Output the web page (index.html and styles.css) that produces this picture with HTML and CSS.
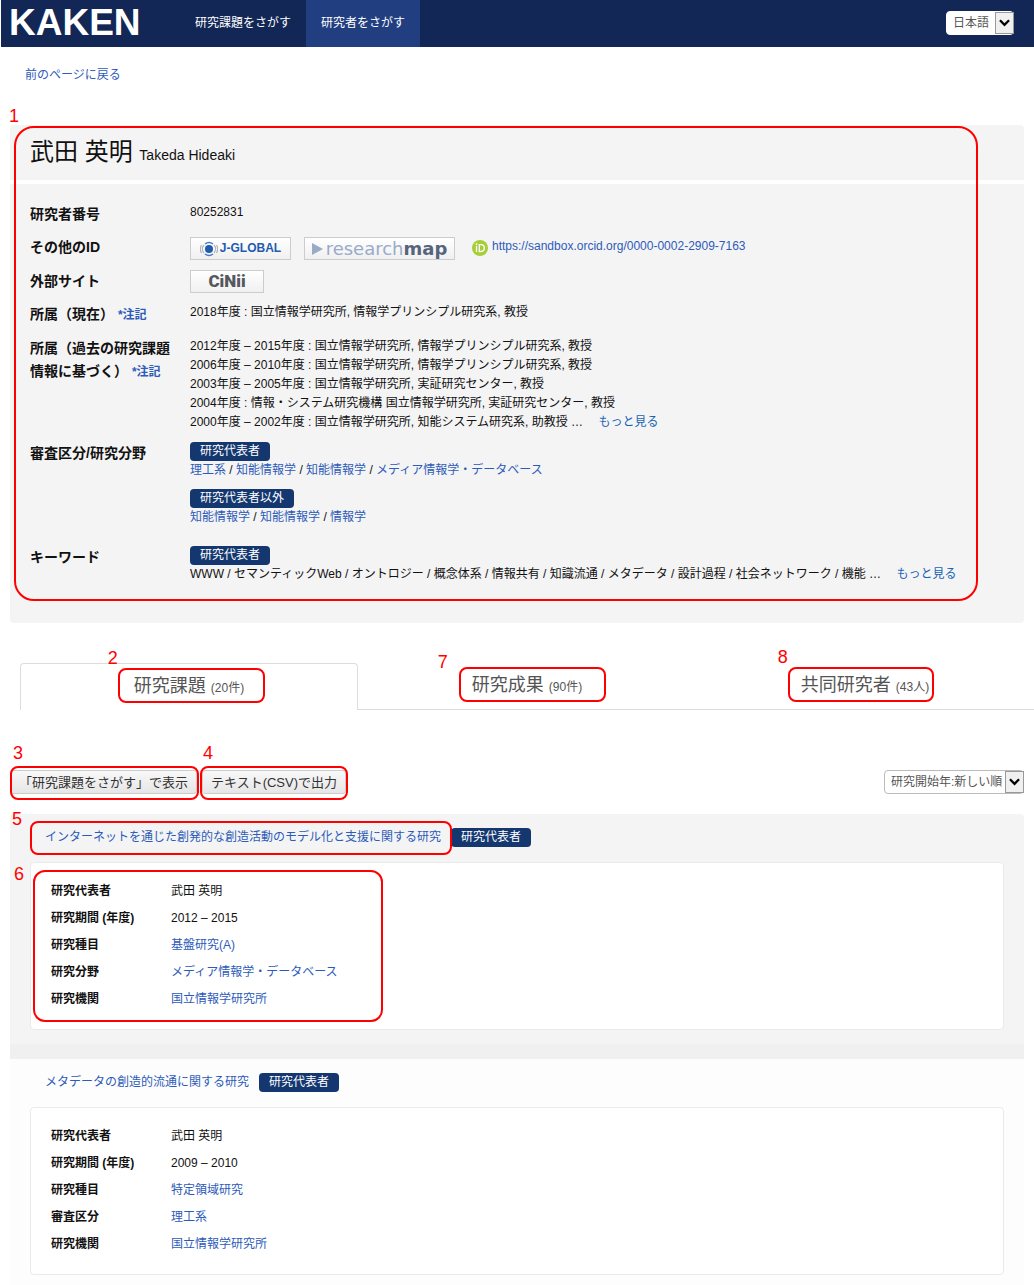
FILE: index.html
```html
<!DOCTYPE html>
<html lang="ja">
<head>
    <meta charset="UTF-8">
    <meta name="viewport" content="width=device-width, initial-scale=1.0">
    <title>KAKEN - 武田 英明</title>
    <link rel="stylesheet" href="styles.css">
</head>
<body>
    <header class="header">
        <a class="logo" href="#">KAKEN</a>
        <nav class="nav">
            <a href="#">研究課題をさがす</a>
            <a class="active" href="#">研究者をさがす</a>
        </nav>
        <div class="select-wrap lang">
            <select aria-label="言語">
                <option>日本語</option>
                <option>English</option>
            </select>
            <svg class="arrow" viewBox="0 0 18 22"><path d="M4 8l5 5 5-5" fill="none" stroke="#000" stroke-width="2.500"/></svg>
        </div>
    </header>

    <main class="main">
        <p class="back"><a href="#">前のページに戻る</a></p>

        <section class="profile">
            <div class="profile-head">
                <h1>武田 英明 <small>Takeda Hideaki</small></h1>
            </div>
            <dl class="profile-body">
                <dt>研究者番号</dt>
                <dd>80252831</dd>
                <dt>その他のID</dt>
                <dd class="ids">
                    <a class="site-btn jglobal" href="#">
                        <svg width="18" height="16" viewBox="0 0 18 16">
                            <circle cx="9" cy="8" r="4" fill="#1f5cb0"/>
                            <path d="M5 3a6.500 6.500 0 0 1 8 0M5 13a6.500 6.500 0 0 0 8 0" fill="none" stroke="#4a7cc0" stroke-width="1.500"/>
                            <path d="M4 4a6 6 0 0 0 0 8M1.500 4a8 8 0 0 0 0 8M14 4a6 6 0 0 1 0 8M16.500 4a8 8 0 0 1 0 8" fill="none" stroke="#b0b4ba" stroke-width="1.200"/>
                        </svg><span>J-GLOBAL</span>
                    </a>
                    <a class="site-btn rmap" href="#">
                        <svg width="11" height="12" viewBox="0 0 11 12"><path d="M0 0l11 6-11 6z" fill="#9aabc9"/></svg>
                        <span>research<b>map</b></span>
                    </a>
                    <a class="orcid" href="#">
                        <svg width="16" height="16" viewBox="0 0 16 16">
                            <circle cx="8" cy="8" r="8" fill="#a6ce39"/>
                            <path d="M4.500 6v6M7.300 4.700v6.800h1.600a3.400 3.400 0 0 0 0-6.800z" fill="none" stroke="#fff" stroke-width="1.300"/>
                            <circle cx="4.500" cy="4.200" r="0.900" fill="#fff"/>
                        </svg>
                        <span>https://sandbox.orcid.org/0000-0002-2909-7163</span>
                    </a>
                </dd>
                <dt>外部サイト</dt>
                <dd><a class="site-btn cinii" href="#">CiNii</a></dd>
                <dt>所属（現在） <a class="ref" href="#">*注記</a></dt>
                <dd>2018年度 : 国立情報学研究所, 情報学プリンシプル研究系, 教授</dd>
                <dt>所属（過去の研究課題<br>情報に基づく） <a class="ref" href="#">*注記</a></dt>
                <dd>
                    2012年度 – 2015年度 : 国立情報学研究所, 情報学プリンシプル研究系, 教授<br>
                    2006年度 – 2010年度 : 国立情報学研究所, 情報学プリンシプル研究系, 教授<br>
                    2003年度 – 2005年度 : 国立情報学研究所, 実証研究センター, 教授<br>
                    2004年度 : 情報・システム研究機構 国立情報学研究所, 実証研究センター, 教授<br>
                    2000年度 – 2002年度 : 国立情報学研究所, 知能システム研究系, 助教授 … <a class="more" href="#">もっと見る</a>
                </dd>
                <dt>審査区分/研究分野</dt>
                <dd class="fields">
                    <div>
                        <span class="badge">研究代表者</span>
                        <p><a href="#">理工系</a> / <a href="#">知能情報学</a> / <a href="#">知能情報学</a> / <a href="#">メディア情報学・データベース</a></p>
                    </div>
                    <div>
                        <span class="badge">研究代表者以外</span>
                        <p><a href="#">知能情報学</a> / <a href="#">知能情報学</a> / <a href="#">情報学</a></p>
                    </div>
                </dd>
                <dt>キーワード</dt>
                <dd>
                    <span class="badge">研究代表者</span>
                    <p>WWW / セマンティックWeb / オントロジー / 概念体系 / 情報共有 / 知識流通 / メタデータ / 設計過程 / 社会ネットワーク / 機能 … <a class="more" href="#">もっと見る</a></p>
                </dd>
            </dl>
            <div class="note note-1"><i>1</i></div>
        </section>

        <nav class="tabs">
            <a class="current" href="#"><span class="tab-label">研究課題 <small>(20件)</small><span class="note note-2"><i>2</i></span></span></a>
            <a href="#"><span class="tab-label">研究成果 <small>(90件)</small><span class="note note-7"><i>7</i></span></span></a>
            <a href="#"><span class="tab-label">共同研究者 <small>(43人)</small><span class="note note-8"><i>8</i></span></span></a>
        </nav>

        <div class="toolbar">
            <div class="tool">
                <button type="button">「研究課題をさがす」で表示</button>
                <div class="note note-3"><i>3</i></div>
            </div>
            <div class="tool">
                <button type="button">テキスト(CSV)で出力</button>
                <div class="note note-4"><i>4</i></div>
            </div>
            <div class="select-wrap sort">
                <select aria-label="並び順">
                    <option>研究開始年:新しい順</option>
                    <option>研究開始年:古い順</option>
                </select>
                <svg class="arrow" viewBox="0 0 18 22"><path d="M4 8l5 5 5-5" fill="none" stroke="#000" stroke-width="2.500"/></svg>
            </div>
        </div>

        <article class="item shaded">
            <h2>
                <span class="item-title"><a href="#">インターネットを通じた創発的な創造活動のモデル化と支援に関する研究</a><span class="note note-5"><i>5</i></span></span>
                <span class="badge">研究代表者</span>
            </h2>
            <div class="item-box">
                <dl>
                    <dt>研究代表者</dt>
                    <dd>武田 英明</dd>
                    <dt>研究期間 (年度)</dt>
                    <dd>2012 – 2015</dd>
                    <dt>研究種目</dt>
                    <dd><a href="#">基盤研究(A)</a></dd>
                    <dt>研究分野</dt>
                    <dd><a href="#">メディア情報学・データベース</a></dd>
                    <dt>研究機関</dt>
                    <dd><a href="#">国立情報学研究所</a></dd>
                </dl>
                <div class="note note-6"><i>6</i></div>
            </div>
        </article>

        <article class="item">
            <h2>
                <span class="item-title"><a href="#">メタデータの創造的流通に関する研究</a></span>
                <span class="badge">研究代表者</span>
            </h2>
            <div class="item-box">
                <dl>
                    <dt>研究代表者</dt>
                    <dd>武田 英明</dd>
                    <dt>研究期間 (年度)</dt>
                    <dd>2009 – 2010</dd>
                    <dt>研究種目</dt>
                    <dd><a href="#">特定領域研究</a></dd>
                    <dt>審査区分</dt>
                    <dd><a href="#">理工系</a></dd>
                    <dt>研究機関</dt>
                    <dd><a href="#">国立情報学研究所</a></dd>
                </dl>
            </div>
        </article>
    </main>
</body>
</html>
```
FILE: styles.css
```css
* {
    box-sizing: border-box;
}
body {
    margin: 0;
    background: #fff;
    color: #111;
    font-family: "Liberation Sans", "Noto Sans CJK JP", sans-serif;
    font-size: 12px;
    line-height: 19px;
}
h1, h2, p, dl, dd {
    margin: 0;
}
a {
    color: #2d5bb9;
    text-decoration: none;
}

/* header */
.header {
    display: flex;
    height: 47px;
    margin-left: 1px;
    padding-right: 20px;
    background: #122756;
}
.logo {
    width: 179px;
    padding-left: 8px;
    color: #fff;
    font-size: 37px;
    font-weight: bold;
    line-height: 46px;
}
.nav {
    display: flex;
}
.nav a {
    padding: 0 15px;
    color: #fff;
    line-height: 47px;
}
.nav .active {
    background: #213e80;
}
.select-wrap {
    position: relative;
    height: 24px;
    margin-left: auto;
}
.select-wrap select {
    height: 24px;
    padding: 0 20px 0 6px;
    appearance: none;
    background: #fff;
    border: 1px solid #bbb;
    border-radius: 4px;
    color: #555;
    font: inherit;
}
.lang {
    margin-top: 11px;
}
.lang select {
    border-color: #fff;
}
.arrow {
    position: absolute;
    top: 1px;
    right: 0;
    width: 19px;
    height: 22px;
    background: #f0f0f0;
    border: 1px solid #999;
    pointer-events: none;
}

.main {
    padding: 0 10px;
}
.back {
    padding: 19px 15px 40px;
}

/* researcher profile */
.profile {
    position: relative;
}
.profile-head {
    height: 55px;
    margin-bottom: 4px;
    padding: 0 20px;
    background: #f4f4f4;
    border-radius: 4px 4px 0 0;
}
.profile-head h1 {
    font-size: 24px;
    font-weight: normal;
    line-height: 53px;
}
.profile-head small {
    font-size: 14px;
}
.profile-body {
    display: grid;
    grid-template-columns: 145px 1fr;
    gap: 10px 15px;
    padding: 19px 20px 39px;
    background: #f4f4f4;
    border-radius: 0 0 4px 4px;
}
.profile-body dt {
    font-size: 14px;
    font-weight: bold;
    line-height: 23px;
}
.ref {
    font-size: 12px;
}
.more {
    margin-left: 12px;
    color: #1663b5;
}
.ids {
    display: flex;
    gap: 13px;
    padding-top: 1px;
}
.site-btn {
    display: flex;
    align-items: center;
    justify-content: center;
    height: 23px;
    background: linear-gradient(#fff, #f0f0f0);
    border: 1px solid #ccc;
}
.jglobal {
    gap: 2px;
    width: 101px;
    color: #1f5cb0;
    font-weight: bold;
}
.rmap {
    gap: 3px;
    width: 151px;
    color: #9aabc9;
    font-family: "DejaVu Sans", sans-serif;
    font-size: 18px;
}
.rmap b {
    color: #56647c;
}
.cinii {
    width: 74px;
    color: #55585e;
    font-family: Roboto, sans-serif;
    font-size: 17px;
    font-weight: 900;
}
.orcid {
    display: flex;
    gap: 4px;
    margin-left: 4px;
}
.orcid svg {
    margin-top: 3px;
}
.fields {
    display: grid;
    gap: 9px;
    padding-bottom: 9px;
}
.badge {
    display: block;
    width: fit-content;
    padding: 0 10px;
    background: #14376f;
    border-radius: 4px;
    color: #fff;
}

/* tabs */
.tabs {
    display: grid;
    grid-template-columns: repeat(3, 1fr);
    margin: 40px -10px 0 10px;
}
.tabs a {
    height: 47px;
    border-bottom: 1px solid #ddd;
    color: #555;
    font-size: 18px;
    line-height: 44px;
    text-align: center;
}
.tabs .current {
    border: 1px solid #ddd;
    border-bottom: 0;
    border-radius: 4px 4px 0 0;
}
.tabs small {
    font-size: 12px;
}
.tab-label {
    display: inline-block;
    position: relative;
}

/* export buttons and sort order */
.toolbar {
    display: flex;
    gap: 5px;
    margin: 60px 0 20px;
}
.tool {
    position: relative;
}
.toolbar button {
    display: block;
    height: 24px;
    padding: 0 8px 2px;
    background: linear-gradient(#f8f8f8, #e6e6e6);
    border: 1px solid #ccc;
    border-radius: 3px;
    color: #333;
    font-family: inherit;
    font-size: 13px;
}

/* project list */
.item {
    padding: 14px 20px 10px;
    background: #fdfdfd;
}
.shaded {
    padding-bottom: 14px;
    background: #f4f4f4;
    border-bottom: 15px solid #f0f0f0;
    border-radius: 4px 4px 0 0;
}
.item h2 {
    display: flex;
    gap: 10px;
    margin-bottom: 15px;
    padding-left: 15px;
    font-size: 12px;
    font-weight: normal;
}
.item-title {
    position: relative;
}
.item-box {
    position: relative;
    padding: 19px 20px 20px;
    background: #fff;
    border: 1px solid #eaeaea;
    border-radius: 4px;
}
.item-box dl {
    display: grid;
    grid-template-columns: 120px 1fr;
    row-gap: 8px;
}
.item-box dt {
    font-weight: bold;
}

/* numbered callouts */
.note {
    position: absolute;
    border: 2px solid #f00;
    border-radius: 8px;
    pointer-events: none;
}
.note i {
    position: absolute;
    color: #f00;
    font-family: "Liberation Sans", sans-serif;
    font-size: 18px;
    font-style: normal;
    line-height: 14px;
}
.note-1 {
    inset: 1px 46px 22px 4px;
    border-radius: 20px;
}
.note-1 i {
    top: -19px;
    left: -7px;
}
.note-2, .note-7, .note-8 {
    top: 4px;
    height: 35px;
}
.note-2 {
    left: -16px;
    right: -21px;
}
.note-7 {
    left: -13px;
    right: -24px;
}
.note-8 {
    left: -13px;
    right: -5px;
}
.note-2 i, .note-8 i {
    top: -19px;
    left: -12px;
}
.note-7 i {
    top: -14px;
    left: -23px;
}
.note-3, .note-4 {
    inset: -4px -2px -6px 0;
}
.note-4 {
    left: -2px;
}
.note-3 i, .note-4 i {
    top: -22px;
    left: 1px;
}
.note-5 {
    inset: -7px -11px -8px -15px;
}
.note-5 i {
    top: -11px;
    left: -20px;
}
.note-6 {
    top: 7px;
    left: 2px;
    bottom: 7px;
    width: 350px;
    border-radius: 12px;
}
.note-6 i {
    top: -5px;
    left: -21px;
}
```
